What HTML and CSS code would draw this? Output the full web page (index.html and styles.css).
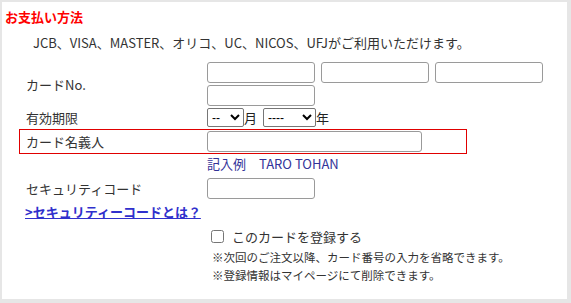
FILE: index.html
```html
<!DOCTYPE html>
<html lang="ja">
<head>
  <meta charset="UTF-8" />
  <title>お支払い方法</title>
  <link rel="stylesheet" href="styles.css">
</head>
<body>
  <div class="panel">
    <h3 class="pay-title">お支払い方法</h3>
    <p class="brands">JCB、VISA、MASTER、オリコ、UC、NICOS、UFJがご利用いただけます。</p>

    <div class="row row-cards">
      <div class="row-label">カードNo.</div>
      <div class="card-nums">
        <input type="text" class="txt txt-num" />
        <input type="text" class="txt txt-num" />
        <input type="text" class="txt txt-num" />
        <input type="text" class="txt txt-num" />
      </div>
    </div>

    <div class="row row-expire">
      <div class="row-label">有効期限</div>
      <div class="expire">
        <select class="sel sel-month"><option>--</option></select><span class="unit">月</span>
        <select class="sel sel-year"><option>----</option></select><span class="unit">年</span>
      </div>
    </div>

    <div class="row row-name">
      <div class="row-label">カード名義人</div>
      <input type="text" class="txt txt-name" />
    </div>

    <div class="example">記入例　TARO TOHAN</div>

    <div class="row row-code">
      <div class="row-label">セキュリティコード</div>
      <input type="text" class="txt txt-num" />
    </div>

    <a href="#" class="code-link">&gt;セキュリティーコードとは？</a>

    <label class="save-card">
      <input type="checkbox" class="chk" />このカードを登録する
    </label>
    <p class="note">※次回のご注文以降、カード番号の入力を省略できます。</p>
    <p class="note">※登録情報はマイページにて削除できます。</p>
  </div>
</body>
</html>
```

FILE: styles.css
```css
* {
  margin: 0;
  padding: 0;
  box-sizing: border-box;
}

body {
  font-family: 'Noto Sans CJK JP', 'Noto Sans', sans-serif;
  background-color: #e6e6e6;
  color: #333;
  font-size: 13px;
}

.panel {
  margin: 2px;
  width: 565px;
  height: 297px;
  background: #fff;
  overflow: hidden;
}

.pay-title {
  color: #ff0000;
  font-size: 13px;
  font-weight: bold;
  line-height: 18px;
  margin: 6px 0 0 3px;
}

.brands {
  line-height: 18px;
  margin: 8px 0 0 31px;
}

.row {
  display: flex;
  align-items: center;
  margin-left: 24px;
}

.row-label {
  width: 181px;
  flex-shrink: 0;
}

.row-cards {
  margin-top: 10px;
}

.card-nums {
  width: 340px;
  display: flex;
  flex-wrap: wrap;
  gap: 2px 6px;
}

.txt {
  height: 21px;
  border: 1px solid #9a9a9a;
  border-radius: 3px;
  background: #fff;
}

.txt-num {
  width: 108px;
}

.txt-name {
  width: 215px;
}

.row-expire {
  margin-top: 2px;
}

.expire {
  display: flex;
  align-items: center;
}

.sel {
  height: 19px;
  font-family: 'Liberation Sans', sans-serif;
  font-size: 12px;
  border: 1px solid #767676;
  border-radius: 2px;
  background: #fff;
  color: #000;
}

.sel-month {
  width: 37px;
}

.sel-year {
  width: 53px;
  margin-left: 6px;
}

.unit {
  font-size: 13px;
  color: #222;
}

.row-name {
  margin: 2px 0 0 17px;
  width: 448px;
  height: 25px;
  border: 1px solid #e00000;
  padding-left: 6px;
}

.example {
  color: #333399;
  line-height: 18px;
  margin: 1px 0 0 205px;
}

.row-code {
  margin-top: 5px;
}

.code-link {
  display: block;
  width: max-content;
  margin: 4px 0 0 23px;
  line-height: 18px;
  font-weight: bold;
  color: #3030cc;
  text-decoration: underline;
}

.save-card {
  display: flex;
  align-items: center;
  margin: 5px 0 0 205px;
  height: 20px;
}

.chk {
  width: 13px;
  height: 13px;
  margin: 0 8px 0 4px;
}

.note {
  font-size: 11.5px;
  line-height: 18px;
  margin-left: 210px;
}

.save-card + .note {
  margin-top: 2px;
}
```
